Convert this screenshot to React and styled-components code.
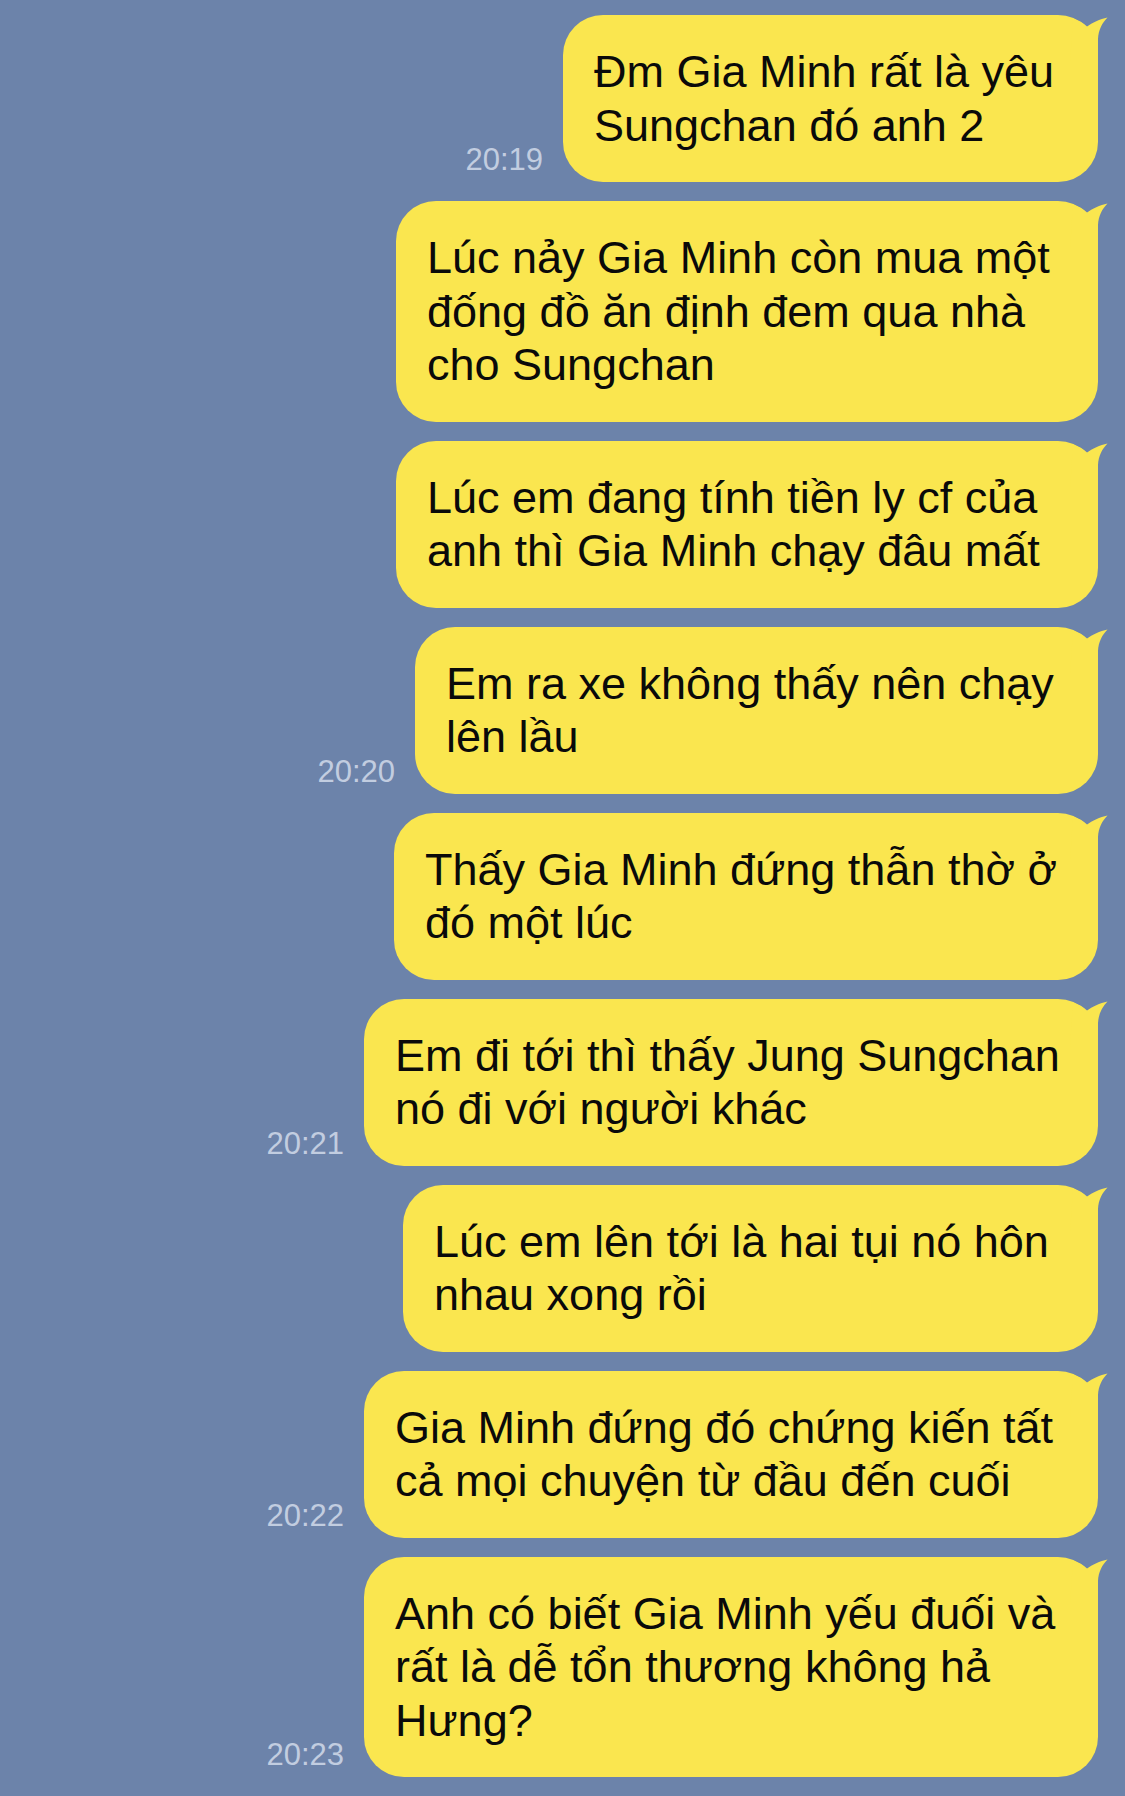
import React from 'react'
import styled, { createGlobalStyle } from 'styled-components'

const GlobalStyle = createGlobalStyle`
    html, body {
        margin: 0;
        padding: 0;
        background: #6c83aa;
    }

    * {
        box-sizing: border-box;
    }
`

const ChatLayout = styled.main`
    width: 1125px;
    min-height: 1796px;
    display: flex;
    flex-direction: column;
    gap: 19px;
    padding: 15px 27px 0 0;
    background: #6c83aa;
    font-family: "Liberation Sans", Arial, sans-serif;
    overflow: hidden;
`

const MessageRow = styled.div`
    display: flex;
    justify-content: flex-end;
    align-items: flex-end;
    gap: 20px;
`

const Time = styled.span`
    font-size: 31px;
    line-height: 31px;
    color: #c2cde0;
    padding-bottom: 7px;
    white-space: nowrap;
`

const Bubble = styled.div`
    position: relative;
    width: ${p => p.$width}px;
    padding: 30px 31px;
    border-radius: 40px;
    background: #fae64f;
    color: #0a0a0a;
    font-size: 45px;
    line-height: 53.5px;
    white-space: nowrap;
`

const Line = styled.span`
    display: block;
`

const Tail = styled.svg`
    position: absolute;
    top: 0;
    right: -12px;
    width: 40px;
    height: 48px;
    overflow: visible;
`

const messages = [
    { width: 535, time: '20:19', lines: ['Đm Gia Minh rất là yêu', 'Sungchan đó anh 2'] },
    { width: 702, lines: ['Lúc nảy Gia Minh còn mua một', 'đống đồ ăn định đem qua nhà', 'cho Sungchan'] },
    { width: 702, lines: ['Lúc em đang tính tiền ly cf của', 'anh thì Gia Minh chạy đâu mất'] },
    { width: 683, time: '20:20', lines: ['Em ra xe không thấy nên chạy', 'lên lầu'] },
    { width: 704, lines: ['Thấy Gia Minh đứng thẫn thờ ở', 'đó một lúc'] },
    { width: 734, time: '20:21', lines: ['Em đi tới thì thấy Jung Sungchan', 'nó đi với người khác'] },
    { width: 695, lines: ['Lúc em lên tới là hai tụi nó hôn', 'nhau xong rồi'] },
    { width: 734, time: '20:22', lines: ['Gia Minh đứng đó chứng kiến tất', 'cả mọi chuyện từ đầu đến cuối'] },
    { width: 734, time: '20:23', lines: ['Anh có biết Gia Minh yếu đuối và', 'rất là dễ tổn thương không hả', 'Hưng?'] },
]

function BubbleTail() {
    // horn at the top right corner, drawn over the rounded corner
    return (
        <Tail viewBox="-28 0 40 48">
            <path
                d="M-25 3.6 C-19 5.6 -14 8.6 -11 11.5 C-6 8 2 4 9.5 2.5 C4 8 0.5 15 0 24 L0 48 L-28 48 Z"
                fill="#fae64f"
            />
        </Tail>
    )
}

export default function App() {
    return (
        <>
            <GlobalStyle />
            <ChatLayout>
                {messages.map((m, i) => (
                    <MessageRow key={i}>
                        {m.time && <Time>{m.time}</Time>}
                        <Bubble $width={m.width}>
                            <BubbleTail />
                            {m.lines.map((l, j) => <Line key={j}>{l}</Line>)}
                        </Bubble>
                    </MessageRow>
                ))}
            </ChatLayout>
        </>
    )
}
